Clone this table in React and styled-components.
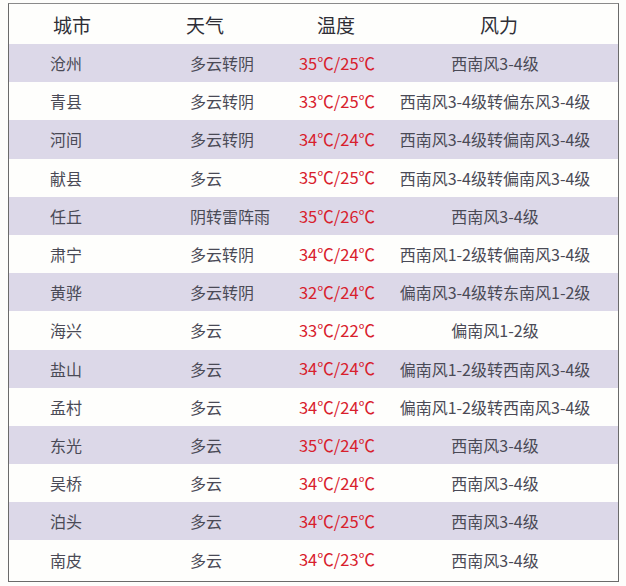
import React from 'react';
import styled, { createGlobalStyle } from 'styled-components';

const GlobalStyle = createGlobalStyle`
  html, body {
    margin: 0;
    padding: 0;
    background: #fdfdfb;
  }
  body {
    font-family: "Noto Sans CJK SC", "Noto Sans", sans-serif;
  }
`;

const rows = [
  ['沧州', '多云转阴', '35℃/25℃', '西南风3-4级'],
  ['青县', '多云转阴', '33℃/25℃', '西南风3-4级转偏东风3-4级'],
  ['河间', '多云转阴', '34℃/24℃', '西南风3-4级转偏南风3-4级'],
  ['献县', '多云', '35℃/25℃', '西南风3-4级转偏南风3-4级'],
  ['任丘', '阴转雷阵雨', '35℃/26℃', '西南风3-4级'],
  ['肃宁', '多云转阴', '34℃/24℃', '西南风1-2级转偏南风3-4级'],
  ['黄骅', '多云转阴', '32℃/24℃', '偏南风3-4级转东南风1-2级'],
  ['海兴', '多云', '33℃/22℃', '偏南风1-2级'],
  ['盐山', '多云', '34℃/24℃', '偏南风1-2级转西南风3-4级'],
  ['孟村', '多云', '34℃/24℃', '偏南风1-2级转西南风3-4级'],
  ['东光', '多云', '35℃/24℃', '西南风3-4级'],
  ['吴桥', '多云', '34℃/24℃', '西南风3-4级'],
  ['泊头', '多云', '34℃/25℃', '西南风3-4级'],
  ['南皮', '多云', '34℃/23℃', '西南风3-4级'],
];

const Page = styled.div`
  padding: 3px 7px 3px 8px;
`;

const Table = styled.div`
  border: 1.5px solid #6a6a6a;
  border-top-color: #8a8a8a;
  background: #fefefc;
  padding-bottom: 2px;
`;

const Row = styled.div`
  display: grid;
  grid-template-columns: 141px 140px 96px 1fr;
  align-items: center;
  height: ${(p) => (p.$head ? '40px' : '38.2px')};
  background: ${(p) => (p.$shaded ? '#dcd8e8' : 'transparent')};
`;

const Cell = styled.div`
  font-size: ${(p) => (p.$head ? '19px' : p.$temp ? '16.5px' : '16px')};
  color: ${(p) => (p.$head ? '#2e2e36' : p.$temp ? '#d8202c' : '#4a4a56')};
  text-align: ${(p) => p.$align || 'left'};
  padding-left: ${(p) => p.$pl || 0}px;
  padding-right: ${(p) => p.$pr || 0}px;
  white-space: nowrap;
  line-height: 1;
`;

export default function App() {
  return (
    <>
      <GlobalStyle />
      <Page>
        <Table>
          <Row $head>
            <Cell $head $pl={44}>城市</Cell>
            <Cell $head $pl={36}>天气</Cell>
            <Cell $head $align="center" $pr={4}>温度</Cell>
            <Cell $head $align="center" $pr={6}>风力</Cell>
          </Row>
          {rows.map((r, i) => (
            <Row key={r[0]} $shaded={i % 2 === 0}>
              <Cell $pl={41}>{r[0]}</Cell>
              <Cell $pl={40}>{r[1]}</Cell>
              <Cell $temp $align="center" $pr={2}>{r[2]}</Cell>
              <Cell $align="center" $pr={14}>{r[3]}</Cell>
            </Row>
          ))}
        </Table>
      </Page>
    </>
  );
}
